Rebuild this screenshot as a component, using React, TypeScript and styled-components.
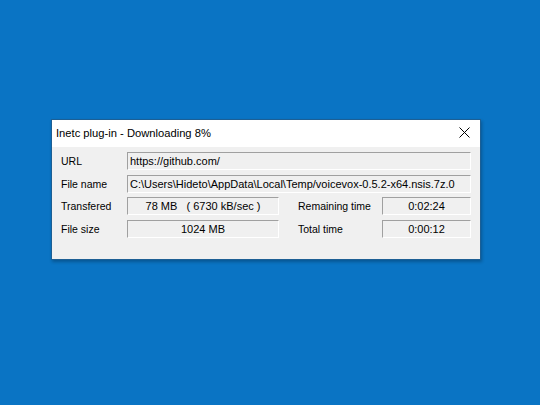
import styled, { createGlobalStyle } from "styled-components";

const GlobalStyle = createGlobalStyle`
  html, body {
    margin: 0;
    padding: 0;
    background: #0a74c4;
  }
  body {
    font-family: "Liberation Sans", Arial, sans-serif;
  }
`;

const Desktop = styled.div`
  width: 540px;
  height: 405px;
  box-sizing: border-box;
  padding: 119px 0 0 51px;
  background: #0a74c4;
`;

const Window = styled.div`
  width: 430px;
  height: 141px;
  box-sizing: border-box;
  border: 1px solid #1d5f94;
  background: #f0f0f0;
  display: flex;
  flex-direction: column;
  box-shadow: 1px 2px 3px rgba(0, 0, 0, 0.25);
`;

const TitleBar = styled.div`
  height: 27px;
  box-sizing: border-box;
  background: #ffffff;
  display: flex;
  align-items: center;
  justify-content: space-between;
  padding: 0 10px 2px 4px;
`;

const Title = styled.span`
  font-size: 11.2px;
  color: #000;
`;

const Close = styled.svg`
  width: 11px;
  height: 11px;
`;

const Body = styled.div`
  display: grid;
  grid-template-columns: 66px 152px 19px 84px 89px;
  grid-auto-rows: 18px;
  row-gap: 4.7px;
  padding: 5px 9px 0 9px;
  align-items: center;
`;

const Label = styled.span<{ $start?: number }>`
  font-size: 10.5px;
  color: #000;
  grid-column: ${(p) => p.$start ?? 1} / span 1;
  white-space: nowrap;
`;

const Field = styled.div<{ $span?: string; $center?: boolean }>`
  grid-column: ${(p) => p.$span ?? "auto"};
  height: 18px;
  box-sizing: border-box;
  border-top: 1px solid #a0a0a0;
  border-left: 1px solid #a0a0a0;
  border-right: 1px solid #ffffff;
  border-bottom: 1px solid #ffffff;
  font-size: 11px;
  color: #000;
  line-height: 16px;
  padding: 0 2px;
  white-space: pre;
  overflow: hidden;
  text-align: ${(p) => (p.$center ? "center" : "left")};
`;

export default function App() {
  return (
    <>
      <GlobalStyle />
      <Desktop>
        <Window>
          <TitleBar>
            <Title>Inetc plug-in - Downloading 8%</Title>
            <Close viewBox="0 0 11 11">
              <path d="M0.5 0.5 L10.5 10.5 M10.5 0.5 L0.5 10.5" stroke="#000" strokeWidth="1" />
            </Close>
          </TitleBar>
          <Body>
            <Label>URL</Label>
            <Field $span="2 / 6">https://github.com/</Field>
            <Label>File name</Label>
            <Field $span="2 / 6">C:\Users\Hideto\AppData\Local\Temp/voicevox-0.5.2-x64.nsis.7z.0</Field>
            <Label>Transfered</Label>
            <Field $span="2 / 3" $center>78 MB   ( 6730 kB/sec )</Field>
            <Label $start={4}>Remaining time</Label>
            <Field $span="5 / 6" $center>0:02:24</Field>
            <Label>File size</Label>
            <Field $span="2 / 3" $center>1024 MB</Field>
            <Label $start={4}>Total time</Label>
            <Field $span="5 / 6" $center>0:00:12</Field>
          </Body>
        </Window>
      </Desktop>
    </>
  );
}
